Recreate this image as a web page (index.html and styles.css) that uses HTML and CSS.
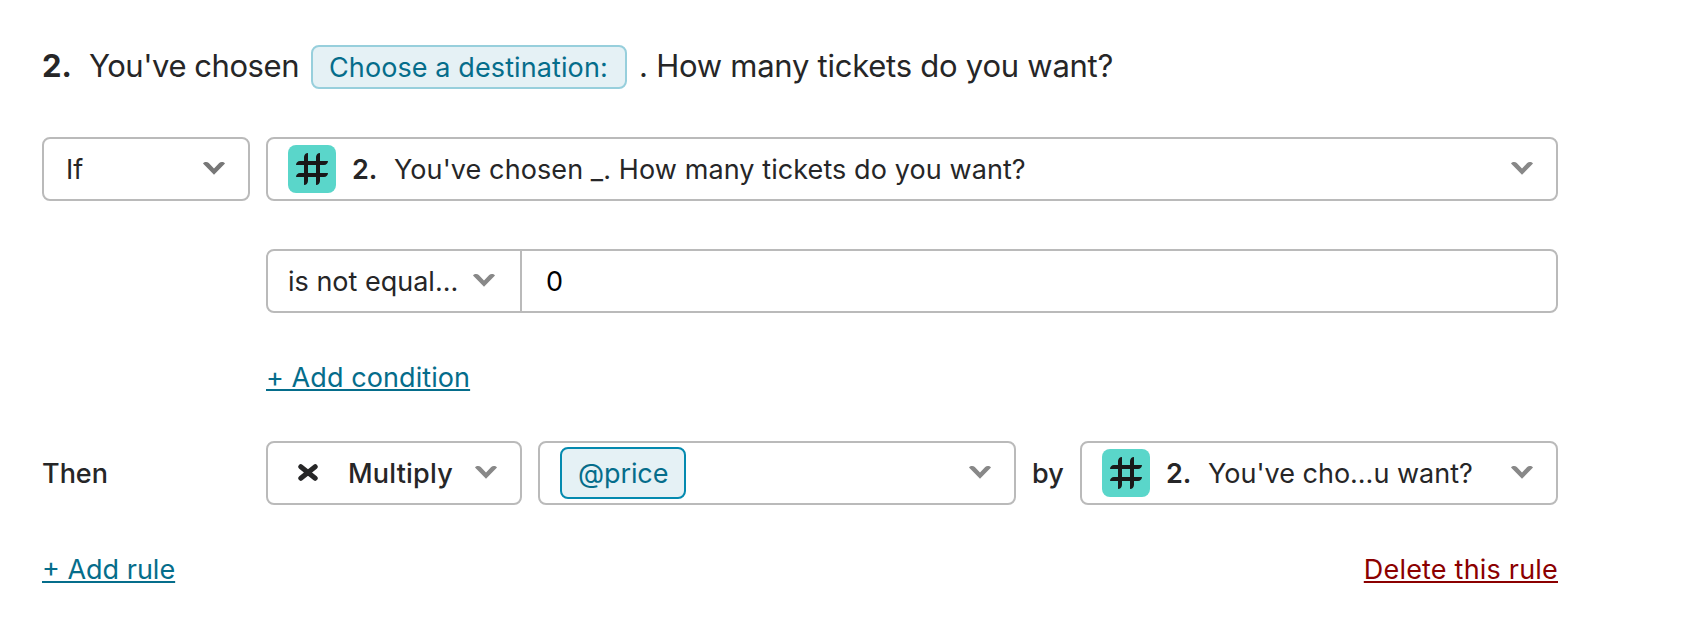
FILE: index.html
```html
<!DOCTYPE html>
<html lang="en">
<head>
<meta charset="UTF-8" />
<meta name="viewport" content="width=device-width, initial-scale=1" />
<title>Logic rules</title>
<link rel="stylesheet" href="styles.css">
</head>
<body>
  <svg class="sprite" aria-hidden="true">
    <symbol id="chevron" viewBox="0 0 22 13">
      <path d="M0 1.500C1.500 -0.300 4.300 -0.300 5.800 1.100L11 6.600L16.200 1.100C17.700 -0.300 20.500 -0.300 22 1.500L11 12.800Z" />
    </symbol>
    <symbol id="hash" viewBox="0 0 48 48">
      <path d="M16 40V12Q16.500 8.200 20 8V36Q19.500 39.800 16 40ZM28 40V12Q28.500 8.200 32 8V36Q31.500 39.800 28 40ZM8 20Q8.300 16.300 12 16H40Q39.700 19.700 36 20ZM8 32Q8.300 28.300 12 28H40Q39.700 31.700 36 32Z" />
    </symbol>
    <symbol id="times" viewBox="0 0 20 17">
      <path d="M2.800 2.700L17.200 14.300M17.200 2.700L2.800 14.300" />
    </symbol>
  </svg>

  <div class="rules">
    <div class="question">
      <b class="number">2.</b>
      <span class="question-start">You've chosen</span>
      <span class="recall">Choose a destination:</span>
      <span class="question-end">. How many tickets do you want?</span>
    </div>

    <div class="row">
      <div class="select select-if">If<svg class="chevron"><use href="#chevron" /></svg></div>
      <div class="select select-field">
        <svg class="hash"><use href="#hash" /></svg>
        <b class="field-number">2.</b>
        <span class="field-text">You've chosen _. How many tickets do you want?</span>
        <svg class="chevron"><use href="#chevron" /></svg>
      </div>
    </div>

    <div class="condition">
      <div class="operator">is not equal...<svg class="chevron"><use href="#chevron" /></svg></div>
      <div class="value">0</div>
    </div>

    <a class="link add-condition" href="#">+ Add condition</a>

    <div class="row row-then">
      <div class="then">Then</div>
      <div class="select select-action">
        <svg class="times"><use href="#times" /></svg>
        <span class="action-text">Multiply</span>
        <svg class="chevron"><use href="#chevron" /></svg>
      </div>
      <div class="select select-variable">
        <span class="variable">@price</span>
        <svg class="chevron"><use href="#chevron" /></svg>
      </div>
      <div class="by">by</div>
      <div class="select select-target">
        <svg class="hash"><use href="#hash" /></svg>
        <b class="field-number">2.</b>
        <span class="target-text">You've cho...u want?</span>
        <svg class="chevron"><use href="#chevron" /></svg>
      </div>
    </div>

    <div class="footer">
      <a class="link" href="#">+ Add rule</a>
      <a class="link delete" href="#">Delete this rule</a>
    </div>
  </div>
</body>
</html>
```
FILE: styles.css
```css
body {
  margin: 0;
  background-color: #fff;
  color: #262627;
  font-family: Inter, "Liberation Sans", sans-serif;
  font-size: 27px;
  line-height: 35px;
}
.sprite {
  display: none;
}
.rules {
  width: 1516px;
  padding: 45px 0 0 42px;
}
.question {
  display: flex;
  align-items: baseline;
  height: 44px;
  margin-bottom: 48px;
  font-size: 31px;
  white-space: nowrap;
}
.number {
  width: 47px;
}
.question-start {
  width: 222px;
  letter-spacing: -0.45px;
}
.recall {
  box-sizing: border-box;
  width: 316px;
  height: 44px;
  padding-left: 16px;
  border: 2px solid #97cfdc;
  border-radius: 8px;
  background-color: #e5f1f5;
  color: #056d8b;
  font-size: 27px;
  line-height: 41px;
  letter-spacing: 0.1px;
}
.question-end {
  margin-left: 12px;
  letter-spacing: -0.25px;
}
.row {
  display: flex;
  gap: 16px;
}
.select {
  box-sizing: border-box;
  display: flex;
  align-items: center;
  height: 64px;
  padding: 0 23px 0 20px;
  border: 2px solid #bababa;
  border-radius: 8px;
  white-space: nowrap;
}
.select-if {
  width: 208px;
  padding-left: 22px;
}
.select-if .chevron {
  fill: #777;
}
.select-field {
  flex: 1;
}
.field-text {
  letter-spacing: 0.09px;
}
.chevron {
  flex: none;
  width: 22px;
  height: 13px;
  margin: 0 0 1px auto;
  fill: #888;
}
.hash {
  flex: none;
  width: 48px;
  height: 48px;
  border-radius: 8px;
  background-color: #5ad6ca;
  fill: #191919;
}
.field-number {
  width: 42px;
  margin-left: 16px;
  font-weight: 600;
}
.condition {
  box-sizing: border-box;
  display: flex;
  height: 64px;
  margin: 48px 0 47px 224px;
  border: 2px solid #bababa;
  border-radius: 8px;
}
.operator {
  box-sizing: border-box;
  display: flex;
  align-items: center;
  width: 254px;
  padding: 0 25px 0 20px;
  border-right: 2px solid #bababa;
  white-space: nowrap;
}
.value {
  display: flex;
  align-items: center;
  padding-left: 24px;
  color: #000;
}
.link {
  color: #056d8b;
  text-decoration: underline;
  text-decoration-thickness: 2px;
  text-underline-offset: 2px;
  text-decoration-skip-ink: none;
}
.add-condition {
  display: block;
  width: max-content;
  margin-left: 224px;
  letter-spacing: 0.08px;
}
.row-then {
  height: 64px;
  margin-top: 46px;
  font-weight: 500;
}
.then {
  width: 208px;
  line-height: 65px;
}
.select-action {
  width: 256px;
}
.times {
  flex: none;
  width: 20px;
  height: 17px;
  margin: 0 30px 1px 10px;
  stroke: #262627;
  stroke-width: 5;
  stroke-linecap: round;
}
.action-text {
  letter-spacing: 0.2px;
}
.select-variable,
.select-target {
  width: 478px;
}
.variable {
  box-sizing: border-box;
  width: 126px;
  height: 52px;
  padding-left: 16px;
  border: 2px solid #048aaf;
  border-radius: 8px;
  background-color: #e5f1f5;
  color: #056d8b;
  font-weight: 400;
  line-height: 49px;
  letter-spacing: -0.1px;
}
.by {
  width: 32px;
  line-height: 65px;
}
.target-text {
  font-weight: 400;
}
.footer {
  display: flex;
  justify-content: space-between;
  margin-top: 47px;
}
.delete {
  color: #8b0000;
  letter-spacing: 0.2px;
}
```
